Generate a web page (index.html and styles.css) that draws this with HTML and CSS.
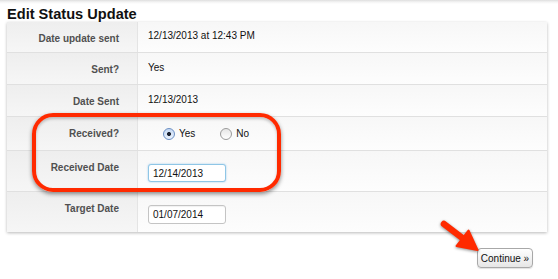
FILE: index.html
```html
<!DOCTYPE html>
<html>
<head>
<meta charset="utf-8">
<link rel="stylesheet" href="styles.css">
</head>
<body>
<div class="page">
  <h1 class="title">Edit Status Update</h1>
  <div class="form">
    <div class="row r1">
      <div class="lbl">Date update sent</div>
      <div class="val">12/13/2013 at 12:43 PM</div>
    </div>
    <div class="row r2">
      <div class="lbl">Sent?</div>
      <div class="val">Yes</div>
    </div>
    <div class="row r3">
      <div class="lbl">Date Sent</div>
      <div class="val">12/13/2013</div>
    </div>
    <div class="row r4">
      <div class="lbl">Received?</div>
      <div class="val radios">
        <span class="radio on"></span><span class="rtext">Yes</span>
        <span class="radio off"></span><span class="rtext">No</span>
      </div>
    </div>
    <div class="row r5">
      <div class="lbl">Received Date</div>
      <div class="val field"><span class="input focus">12/14/2013</span></div>
    </div>
    <div class="row r6">
      <div class="lbl">Target Date</div>
      <div class="val field"><span class="input">01/07/2014</span></div>
    </div>
  </div>
  <div class="actions"><button class="btn">Continue »</button></div>
  <div class="highlight"></div>
  <svg class="arrow" width="50" height="44" viewBox="0 0 50 44">
    <path d="M8 9 L27 23.5" stroke="#ff2a00" stroke-width="6.5" stroke-linecap="round" fill="none"/>
    <path d="M41.5 35 L20.5 31 L32.5 15.5 Z" fill="#ff2a00" stroke="#ff2a00" stroke-width="2" stroke-linejoin="round"/>
  </svg>
</div>
</body>
</html>
```
FILE: styles.css
```css
html, body {
  margin: 0;
  padding: 0;
}
body {
  width: 558px;
  height: 279px;
  background: linear-gradient(to bottom, #dedede 0, #f4f4f4 2px, #ffffff 4px) no-repeat #ffffff;
  font-family: "Liberation Sans", Arial, sans-serif;
  overflow: hidden;
}
.page {
  position: relative;
  height: 279px;
}
.title {
  margin: 0;
  padding: 6px 0 0 7px;
  font-size: 14.6px;
  line-height: 16px;
  font-weight: bold;
  color: #111;
}
.form {
  margin-left: 7px;
  width: 540px;
  background: #fbfbfb;
  box-shadow: 0 1px 3px rgba(0,0,0,0.28);
}
.row {
  display: flex;
  border-bottom: 1px solid #e0e0e0;
  box-sizing: border-box;
}
.row.r6 { border-bottom: none; }
.r1 { height: 31px; }
.r2 { height: 32px; }
.r3 { height: 32px; }
.r4 { height: 34px; }
.r5 { height: 41px; }
.r6 { height: 40px; }
.lbl {
  width: 131px;
  box-sizing: border-box;
  padding: 11px 18px 0 0;
  text-align: right;
  font-size: 10px;
  line-height: 12px;
  font-weight: bold;
  color: #505050;
  background: linear-gradient(to bottom, #eeeeee, #f6f6f6);
  border-right: 1px solid #e4e4e4;
}
.val {
  flex: 1;
  padding: 9px 0 0 10px;
  font-size: 10px;
  line-height: 12px;
  color: #111;
  background: linear-gradient(to bottom, #f7f7f7, #fdfdfd);
}
.r1 .val { padding-top: 8px; }
.radios {
  display: flex;
  align-items: flex-start;
  padding-top: 10.5px;
  padding-left: 25px;
}
.radio {
  width: 12px;
  height: 12px;
  box-sizing: border-box;
  border-radius: 50%;
  flex: none;
}
.radio.on {
  border: 1px solid #6b8fc4;
  background: radial-gradient(circle, #1d2433 0, #1d2433 1.7px, transparent 2.3px), linear-gradient(to bottom, #c5d8f2, #eaf2fc);
}
.radio.off {
  border: 1px solid #9a9a9a;
  background: linear-gradient(to bottom, #e6e6e6, #ffffff);
  margin-left: 25px;
}
.rtext {
  margin-left: 4px;
  line-height: 12px;
}
.field {
  padding-top: 13px;
}
.input {
  display: inline-block;
  width: 78px;
  height: 19px;
  box-sizing: border-box;
  border: 1px solid #c4c4c4;
  border-radius: 3px;
  background: #fff;
  padding: 3px 0 0 4px;
  font-size: 10px;
  line-height: 12px;
  color: #111;
  box-shadow: inset 0 1px 1px rgba(0,0,0,0.06);
}
.input.focus {
  border-color: #8fc6e6;
  box-shadow: 0 0 2px rgba(110,180,230,0.7);
  height: 18px;
}
.actions {
  display: flex;
  justify-content: flex-end;
  padding: 16px 25px 0 0;
}
.btn {
  width: 56px;
  height: 20px;
  padding: 0;
  border: 1px solid #a8a8a8;
  border-radius: 4px;
  background: linear-gradient(to bottom, #ffffff, #e6e6e6);
  font-family: "Liberation Sans", Arial, sans-serif;
  font-size: 10px;
  color: #111;
  box-shadow: 0 1px 1px rgba(0,0,0,0.12);
}
.highlight {
  position: absolute;
  left: 32px;
  top: 113px;
  width: 249px;
  height: 79px;
  box-sizing: border-box;
  border: 4.5px solid #ff2a00;
  border-radius: 21px;
  box-shadow: 0 2px 4px rgba(0,0,0,0.45), inset 0 2px 3px rgba(0,0,0,0.22);
}
.arrow {
  position: absolute;
  left: 436px;
  top: 215px;
  filter: drop-shadow(0 1px 1.5px rgba(0,0,0,0.45));
}
```
